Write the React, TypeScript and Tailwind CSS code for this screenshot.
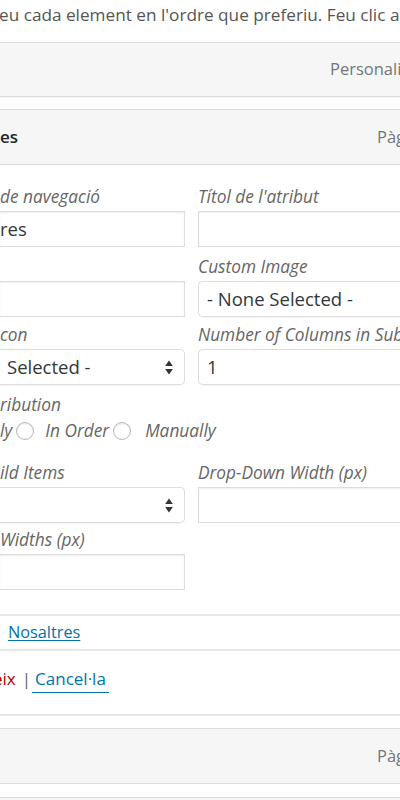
import React from "react";

function Arrows() {
  return (
    <svg width="8" height="15" viewBox="0 0 8 15" className="shrink-0">
      <path d="M4 0.5 L7.8 6 L0.2 6 Z" fill="#333" />
      <path d="M0.2 9 L7.8 9 L4 14.5 Z" fill="#333" />
    </svg>
  );
}

function Radio() {
  return (
    <span className="inline-block h-[18px] w-[18px] shrink-0 rounded-full border border-[#b4b9be] bg-white shadow-[inset_0_1px_2px_rgba(0,0,0,0.1)]" />
  );
}

const label = "h-[24px] leading-[24px] italic text-[17.3px] text-[#666] whitespace-nowrap overflow-hidden";
const textInputL =
  "mt-[2px] h-[36px] w-full border border-l-0 border-[#dddddd] bg-white shadow-[inset_0_1px_2px_rgba(0,0,0,0.07)] flex items-center text-[18.5px] text-[#32373c] whitespace-nowrap overflow-hidden";
const textInputR =
  "mt-[2px] h-[36px] w-full border border-r-0 border-[#dddddd] bg-white shadow-[inset_0_1px_2px_rgba(0,0,0,0.07)] flex items-center text-[18.5px] text-[#32373c] whitespace-nowrap overflow-hidden";
const selectL =
  "mt-[2px] h-[36px] w-full border border-l-0 border-[#dddddd] rounded-r-[5px] bg-white shadow-[0_1px_1px_rgba(0,0,0,0.04)] flex items-center text-[18.5px] text-[#32373c] whitespace-nowrap overflow-hidden";
const selectR =
  "mt-[2px] h-[36px] w-full border border-r-0 border-[#dddddd] rounded-l-[5px] bg-white shadow-[0_1px_1px_rgba(0,0,0,0.04)] flex items-center text-[18.5px] text-[#32373c] whitespace-nowrap overflow-hidden";

export default function App() {
  return (
    <div className="h-[800px] w-[400px] overflow-hidden bg-white font-['Open_Sans',sans-serif] text-[16px]">
      <p className="-ml-[1px] whitespace-nowrap pt-[3px] text-[17.2px] leading-[24px] text-[#555]">
        eu cada element en l'ordre que preferiu. Feu clic a la fletxa de la dreta de l'element per a mostrar opcions de configuració addicionals.
      </p>

      {/* item 1 */}
      <div className="mt-[15px] flex h-[55px] items-center whitespace-nowrap border-y border-[#dcdcdc] bg-[#f6f6f6] shadow-[0_1px_1px_rgba(0,0,0,0.04)]">
        <span className="pl-[330px] text-[16.5px] text-[#72777c]">Personalitzat</span>
      </div>

      {/* item 2 */}
      <div className="mt-[12px]">
        <div className="flex h-[56px] items-center whitespace-nowrap border-y border-[#dcdcdc] bg-[#f6f6f6]">
          <span className="w-[377px] shrink-0 text-[17px] font-semibold text-[#23282d]">es</span>
          <span className="text-[16.5px] text-[#72777c]">Pàgina</span>
        </div>

        <div className="h-[551px] border-b-2 border-[#e5e5e5] bg-white pt-[20px]">
          {/* row 1 */}
          <div className="flex gap-[13px]">
            <div className="w-[185px] shrink-0">
              <div className={label}>de navegació</div>
              <div className={textInputL}>
                <span className="pl-0">res</span>
              </div>
            </div>
            <div className="w-[240px] shrink-0">
              <div className={label}>Títol de l'atribut</div>
              <div className={textInputR} />
            </div>
          </div>

          {/* row 2 */}
          <div className="mt-[8px] flex gap-[13px]">
            <div className="w-[185px] shrink-0">
              <div className={label}></div>
              <div className={textInputL} />
            </div>
            <div className="w-[240px] shrink-0">
              <div className={label}>Custom Image</div>
              <div className={selectR}>
                <span className="pl-[8px]">- None Selected -</span>
              </div>
            </div>
          </div>

          {/* row 3 */}
          <div className="mt-[6px] flex gap-[13px]">
            <div className="w-[185px] shrink-0">
              <div className={label}>con</div>
              <div className={selectL}>
                <span className="flex-1 pl-[7px]">Selected -</span>
                <span className="pr-[11px]">
                  <Arrows />
                </span>
              </div>
            </div>
            <div className="w-[240px] shrink-0">
              <div className={label}>Number of Columns in Submenu</div>
              <div className={selectR}>
                <span className="pl-[8px]">1</span>
              </div>
            </div>
          </div>

          {/* row 4: distribution */}
          <div className="mt-[8px]">
            <div className={label}>ribution</div>
            <div className="mt-[2px] flex h-[24px] items-center whitespace-nowrap text-[17.3px] italic text-[#666]">
              <span>ly</span>
              <span className="ml-[4px] mr-[11px] flex">
                <Radio />
              </span>
              <span>In Order</span>
              <span className="ml-[4px] mr-[14px] flex">
                <Radio />
              </span>
              <span>Manually</span>
            </div>
          </div>

          {/* row 5 */}
          <div className="mt-[18px] flex gap-[13px]">
            <div className="w-[185px] shrink-0">
              <div className={label}>ild Items</div>
              <div className={selectL}>
                <span className="flex-1" />
                <span className="pr-[11px]">
                  <Arrows />
                </span>
              </div>
            </div>
            <div className="w-[240px] shrink-0">
              <div className={label}>Drop-Down Width (px)</div>
              <div className={textInputR} />
            </div>
          </div>

          {/* row 6 */}
          <div className="mt-[5px] flex gap-[13px]">
            <div className="w-[185px] shrink-0">
              <div className={label}>Widths (px)</div>
              <div className={textInputL} />
            </div>
          </div>

          {/* move */}
          <div className="mt-[24px] flex h-[37px] items-center border-y-2 border-[#e8e8e8]">
            <a className="ml-[8px] text-[16.3px] text-[#0073aa] underline decoration-1 underline-offset-[2px]">Nosaltres</a>
          </div>

          {/* actions */}
          <div className="mt-[16px] flex h-[24px] items-center whitespace-nowrap text-[17px] leading-[24px]">
            <span className="-ml-[7px] text-[#a00]">eix</span>
            <span className="ml-[6px] text-[#666]">|</span>
            <span className="ml-[1px] border-b border-[#0073aa] px-[3px] leading-[26px] text-[#0073aa]">Cancel·la</span>
          </div>
        </div>
      </div>

      {/* item 3 */}
      <div className="mt-[12px] flex h-[56px] items-center whitespace-nowrap border-y border-[#dcdcdc] bg-[#f6f6f6]">
        <span className="pl-[377px] text-[16.5px] text-[#72777c]">Pàgina</span>
      </div>

      {/* item 4 */}
      <div className="mt-[13px] h-[56px] border-y border-[#dcdcdc] bg-[#f6f6f6]" />
    </div>
  );
}
